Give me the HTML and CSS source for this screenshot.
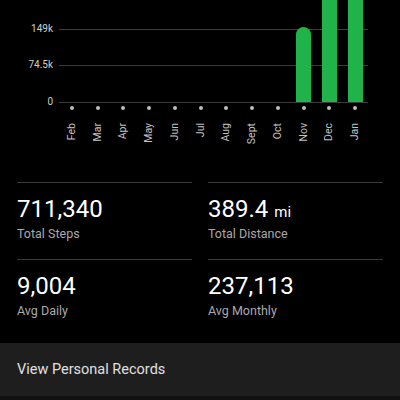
FILE: index.html
```html
<!DOCTYPE html>
<html>
<head>
<meta charset="utf-8">
<link rel="stylesheet" href="styles.css">
</head>
<body>
<div class="chart">
  <div class="yaxis">
    <div class="ylabel">149k</div>
    <div class="ylabel">74.5k</div>
    <div class="ylabel">0</div>
  </div>
  <div class="plotwrap">
    <div class="plot">
      <div class="slot"></div><div class="slot"></div><div class="slot"></div>
      <div class="slot"></div><div class="slot"></div><div class="slot"></div>
      <div class="slot"></div><div class="slot"></div><div class="slot"></div>
      <div class="slot"><div class="bar" style="height:75px"></div></div>
      <div class="slot"><div class="bar" style="height:140px"></div></div>
      <div class="slot"><div class="bar" style="height:140px"></div></div>
    </div>
    <div class="dots">
      <span class="dot"></span><span class="dot"></span><span class="dot"></span>
      <span class="dot"></span><span class="dot"></span><span class="dot"></span>
      <span class="dot"></span><span class="dot"></span><span class="dot"></span>
      <span class="dot"></span><span class="dot"></span><span class="dot"></span>
    </div>
    <div class="months">
      <div class="mcell"><span class="month">Feb</span></div>
      <div class="mcell"><span class="month">Mar</span></div>
      <div class="mcell"><span class="month">Apr</span></div>
      <div class="mcell"><span class="month">May</span></div>
      <div class="mcell"><span class="month">Jun</span></div>
      <div class="mcell"><span class="month">Jul</span></div>
      <div class="mcell"><span class="month">Aug</span></div>
      <div class="mcell"><span class="month">Sept</span></div>
      <div class="mcell"><span class="month">Oct</span></div>
      <div class="mcell"><span class="month">Nov</span></div>
      <div class="mcell"><span class="month">Dec</span></div>
      <div class="mcell"><span class="month">Jan</span></div>
    </div>
  </div>
</div>
<div class="stats">
  <div class="stat">
    <div class="value">711,340</div>
    <div class="label">Total Steps</div>
  </div>
  <div class="stat">
    <div class="value">389.4 <span class="unit">mi</span></div>
    <div class="label">Total Distance</div>
  </div>
  <div class="stat">
    <div class="value">9,004</div>
    <div class="label">Avg Daily</div>
  </div>
  <div class="stat">
    <div class="value">237,113</div>
    <div class="label">Avg Monthly</div>
  </div>
</div>
<div class="records">View Personal Records</div>
<div class="footer"></div>
</body>
</html>
```

FILE: styles.css
```css
html, body {
  margin: 0;
  padding: 0;
  background: #000;
  font-family: Roboto, "Liberation Sans", sans-serif;
  overflow: hidden;
}

.chart {
  display: flex;
  height: 182px;
}

.yaxis {
  width: 59px;
  box-sizing: border-box;
  padding: 23px 6px 0 0;
  display: flex;
  flex-direction: column;
  align-items: flex-end;
  gap: 24.3px;
}

.ylabel {
  font-size: 10px;
  line-height: 12px;
  color: #cfcfcf;
}

.plotwrap {
  width: 309px;
}

.plot {
  height: 103px;
  box-sizing: border-box;
  padding-bottom: 1px;
  overflow: hidden;
  display: grid;
  grid-template-columns: repeat(12, 1fr);
  grid-template-rows: 102px;
  background:
    linear-gradient(#3c3c3c, #3c3c3c) 0 29px / 100% 1px no-repeat,
    linear-gradient(#3c3c3c, #3c3c3c) 0 65px / 100% 1px no-repeat,
    linear-gradient(#3c3c3c, #3c3c3c) 0 102px / 100% 1px no-repeat;
}

.slot {
  display: flex;
  justify-content: center;
  align-items: flex-end;
  height: 102px;
  min-height: 0;
}

.bar {
  flex: none;
  width: 15px;
  background: #1fb34a;
  border-radius: 7.5px 7.5px 0 0;
}

.dots {
  margin-top: 3px;
  display: grid;
  grid-template-columns: repeat(12, 1fr);
  justify-items: center;
}

.dot {
  width: 4px;
  height: 4px;
  border-radius: 50%;
  background: #bdbdbd;
}

.months {
  margin-top: 13px;
  display: grid;
  grid-template-columns: repeat(12, 1fr);
  align-items: start;
}

.mcell {
  display: flex;
  justify-content: center;
}

.month {
  writing-mode: vertical-rl;
  transform: rotate(180deg);
  font-size: 10.5px;
  line-height: 12px;
  color: #c4c4c4;
}

.stats {
  padding: 0 17px;
  display: grid;
  grid-template-columns: 1fr 1fr;
  column-gap: 16px;
}

.stat {
  border-top: 1px solid #3a3a3a;
  padding: 12px 0 18px;
}

.value {
  font-size: 24px;
  line-height: 28px;
  height: 28px;
  color: #fff;
}

.unit {
  font-size: 15px;
  line-height: 1;
}

.label {
  margin-top: 3px;
  font-size: 12.5px;
  line-height: 15px;
  color: #a9a9a9;
}

.records {
  margin-top: 7px;
  height: 53px;
  box-sizing: border-box;
  padding: 0 17px;
  display: flex;
  align-items: center;
  background: #1e1e1e;
  font-size: 14.5px;
  color: #e0e0e0;
}

.footer {
  height: 10px;
  background: #111;
}
```
